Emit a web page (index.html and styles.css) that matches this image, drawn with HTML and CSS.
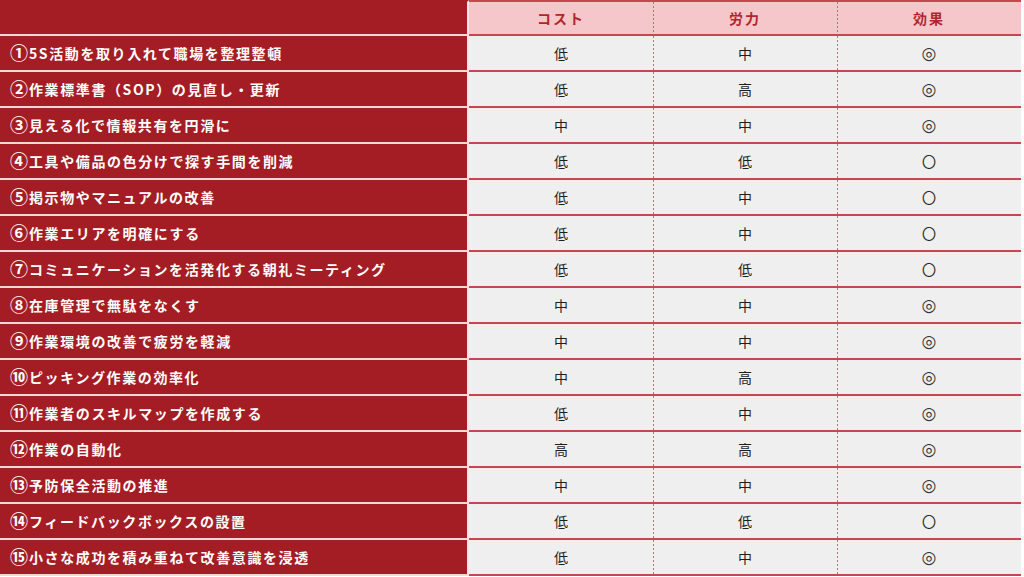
FILE: index.html
```html
<!DOCTYPE html>
<html lang="ja">
<head>
<meta charset="utf-8">
<link rel="stylesheet" href="styles.css">
</head>
<body>
<table class="grid">
  <colgroup>
    <col class="c-item"><col class="c-val"><col class="c-val"><col class="c-val">
  </colgroup>
  <thead>
    <tr>
      <th class="item"></th>
      <th class="head">コスト</th>
      <th class="head">労力</th>
      <th class="head">効果</th>
    </tr>
  </thead>
  <tbody>
    <tr><td class="item"><span class="num">①</span>5S活動を取り入れて職場を整理整頓</td><td>低</td><td>中</td><td class="dbl">◎</td></tr>
    <tr><td class="item"><span class="num">②</span>作業標準書（SOP）の見直し・更新</td><td>低</td><td>高</td><td class="dbl">◎</td></tr>
    <tr><td class="item"><span class="num">③</span>見える化で情報共有を円滑に</td><td>中</td><td>中</td><td class="dbl">◎</td></tr>
    <tr><td class="item"><span class="num">④</span>工具や備品の色分けで探す手間を削減</td><td>低</td><td>低</td><td class="sgl">〇</td></tr>
    <tr><td class="item"><span class="num">⑤</span>掲示物やマニュアルの改善</td><td>低</td><td>中</td><td class="sgl">〇</td></tr>
    <tr><td class="item"><span class="num">⑥</span>作業エリアを明確にする</td><td>低</td><td>中</td><td class="sgl">〇</td></tr>
    <tr><td class="item"><span class="num">⑦</span>コミュニケーションを活発化する朝礼ミーティング</td><td>低</td><td>低</td><td class="sgl">〇</td></tr>
    <tr><td class="item"><span class="num">⑧</span>在庫管理で無駄をなくす</td><td>中</td><td>中</td><td class="dbl">◎</td></tr>
    <tr><td class="item"><span class="num">⑨</span>作業環境の改善で疲労を軽減</td><td>中</td><td>中</td><td class="dbl">◎</td></tr>
    <tr><td class="item"><span class="num">⑩</span>ピッキング作業の効率化</td><td>中</td><td>高</td><td class="dbl">◎</td></tr>
    <tr><td class="item"><span class="num">⑪</span>作業者のスキルマップを作成する</td><td>低</td><td>中</td><td class="dbl">◎</td></tr>
    <tr><td class="item"><span class="num">⑫</span>作業の自動化</td><td>高</td><td>高</td><td class="dbl">◎</td></tr>
    <tr><td class="item"><span class="num">⑬</span>予防保全活動の推進</td><td>中</td><td>中</td><td class="dbl">◎</td></tr>
    <tr><td class="item"><span class="num">⑭</span>フィードバックボックスの設置</td><td>低</td><td>低</td><td class="sgl">〇</td></tr>
    <tr><td class="item"><span class="num">⑮</span>小さな成功を積み重ねて改善意識を浸透</td><td>低</td><td>中</td><td class="dbl">◎</td></tr>
  </tbody>
</table>
</body>
</html>
```

FILE: styles.css
```css
html, body {
  margin: 0;
  padding: 0;
  background: #ffffff;
}

.grid {
  width: 1021px;
  border-collapse: separate;
  border-spacing: 0;
  table-layout: fixed;
  font-family: "Noto Sans CJK JP", "Noto Sans", sans-serif;
}

.c-item { width: 469px; }
.c-val { width: 184px; }

.grid th,
.grid td {
  height: 34px;
  padding: 0;
  text-align: center;
  vertical-align: middle;
  font-size: 14px;
  line-height: 20px;
  color: #1e1e1e;
  background-color: #efefef;
  background-image: linear-gradient(to bottom, #e0646d 50%, transparent 50%);
  background-size: 1px 4px;
  background-repeat: repeat-y;
  background-position: left top;
  border-bottom: 2px solid #c8474f;
}

.grid td.dbl {
  font-family: "DejaVu Sans", sans-serif;
  font-size: 17px;
  color: #333333;
}

.grid td.sgl {
  font-size: 14px;
  color: #222222;
}

.grid .item {
  text-align: left;
  padding-left: 10px;
  background-color: #a51d24;
  background-image: none;
  color: #ffffff;
  font-weight: 700;
  letter-spacing: 1.6px;
  border-right: 2px solid #f6e4e5;
  border-bottom: 2px solid #f1d7d8;
  white-space: nowrap;
}

.num {
  font-size: 18px;
  letter-spacing: 0;
  margin-right: 1px;
  vertical-align: -1px;
  line-height: 1;
}

.grid tr > :nth-child(2) {
  background-image: none;
}

.grid .head {
  background-color: #f5c7ca;
  color: #b3252d;
  font-weight: 700;
  letter-spacing: 2px;
  border-top: 2px solid #c8474f;
  height: 32px;
}

.grid th.item {
  background-color: #a51d24;
  border-top: 2px solid #a51d24;
  height: 32px;
}
```
